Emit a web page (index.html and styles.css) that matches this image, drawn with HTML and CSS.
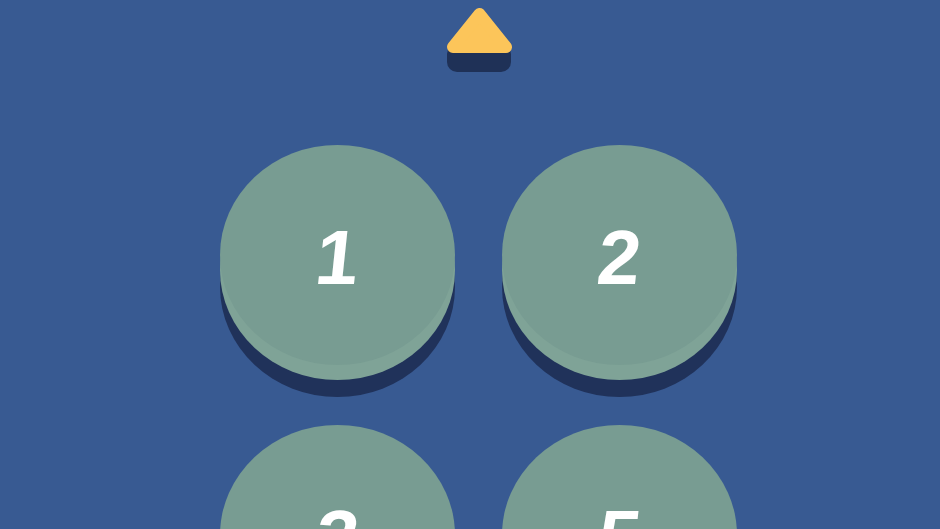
FILE: index.html
```html
<!DOCTYPE html>
<html lang="en">
<head>
<meta charset="utf-8">
<title>Pick a number</title>
<link rel="stylesheet" href="styles.css">
</head>
<body>
<main class="stage">
  <button class="up" type="button" aria-label="Back">
    <svg class="up-icon" width="68" height="68" viewBox="0 0 68 68">
      <rect class="up-shadow" x="2" y="38" width="64" height="28" rx="10"/>
      <polygon class="up-face" points="34.5,8 61,41 8,41"/>
    </svg>
  </button>
  <div class="grid">
    <button class="disc" type="button"><span class="num">1</span></button>
    <button class="disc" type="button"><span class="num">2</span></button>
    <button class="disc" type="button"><span class="num">3</span></button>
    <button class="disc" type="button"><span class="num">5</span></button>
  </div>
</main>
</body>
</html>
```
FILE: styles.css
```css
html, body {
  margin: 0;
  height: 100%;
}

body {
  background: #385a92;
  overflow: hidden;
  font-family: "Liberation Sans", Arial, sans-serif;
}

.stage {
  width: 517px;
  margin-left: 220px;
  padding-top: 6px;
  display: flex;
  flex-direction: column;
  align-items: center;
}

.up {
  border: 0;
  padding: 0;
  background: none;
  display: block;
  width: 68px;
  height: 68px;
  margin-left: 1px;
  cursor: pointer;
}

.up-icon {
  display: block;
}

.up-shadow {
  fill: #1f3157;
}

.up-face {
  fill: #fcc55a;
  stroke: #fcc55a;
  stroke-width: 12;
  stroke-linejoin: round;
}

.grid {
  margin-top: 71px;
  display: grid;
  grid-template-columns: 235px 235px;
  column-gap: 47px;
  row-gap: 60px;
}

.disc {
  width: 235px;
  height: 220px;
  border: 0;
  padding: 0;
  border-radius: 50%;
  background: #789c92;
  box-shadow: 0 15px 0 #7fa397, 0 32px 0 #20325a;
  display: flex;
  align-items: center;
  justify-content: center;
  cursor: pointer;
}

.num {
  color: #ffffff;
  font-family: "Liberation Sans", Arial, sans-serif;
  font-weight: 700;
  font-size: 77px;
  line-height: 1;
  display: inline-block;
  transform: skewX(-6deg);
  margin-top: 4px;
}
```
